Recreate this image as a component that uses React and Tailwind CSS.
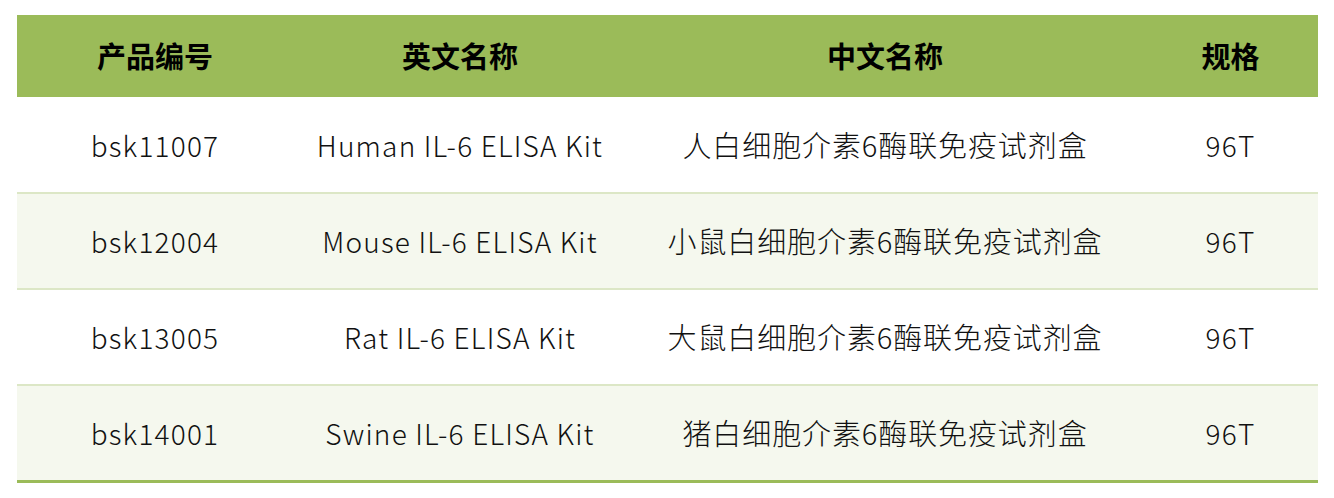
import React from "react";

const rows = [
  { code: "bsk11007", en: "Human IL-6 ELISA Kit", cn: "人白细胞介素6酶联免疫试剂盒", spec: "96T" },
  { code: "bsk12004", en: "Mouse IL-6 ELISA Kit", cn: "小鼠白细胞介素6酶联免疫试剂盒", spec: "96T" },
  { code: "bsk13005", en: "Rat IL-6 ELISA Kit", cn: "大鼠白细胞介素6酶联免疫试剂盒", spec: "96T" },
  { code: "bsk14001", en: "Swine IL-6 ELISA Kit", cn: "猪白细胞介素6酶联免疫试剂盒", spec: "96T" },
];

export default function App() {
  return (
    <div className="bg-white w-[1334px] h-[498px] pt-[15px] pl-[17px] font-['Noto_Sans_CJK_SC',sans-serif]">
      <table className="w-[1301px] border-collapse text-center table-fixed">
        <colgroup>
          <col className="w-[276px]" />
          <col className="w-[334px]" />
          <col className="w-[516px]" />
          <col className="w-[175px]" />
        </colgroup>
        <thead>
          <tr className="bg-[#9bbb59] h-[82px] text-[29px] font-bold text-black">
            <th className="font-bold">产品编号</th>
            <th className="font-bold">英文名称</th>
            <th className="font-bold">中文名称</th>
            <th className="font-bold">规格</th>
          </tr>
        </thead>
        <tbody className="text-[28px] font-light tracking-[1.2px] text-[#111]">
          {rows.map((r, i) => (
            <tr
              key={r.code}
              className={`h-[96px] ${i % 2 === 1 ? "bg-[#f5f8ee]" : "bg-white"} ${
                i === rows.length - 1 ? "border-b-[3px] border-[#9bbb59]" : "border-b-2 border-[#dce7c6]"
              }`}
            >
              <td>{r.code}</td>
              <td>{r.en}</td>
              <td className="text-[29px] tracking-[0.9px]">{r.cn}</td>
              <td>{r.spec}</td>
            </tr>
          ))}
        </tbody>
      </table>
    </div>
  );
}
